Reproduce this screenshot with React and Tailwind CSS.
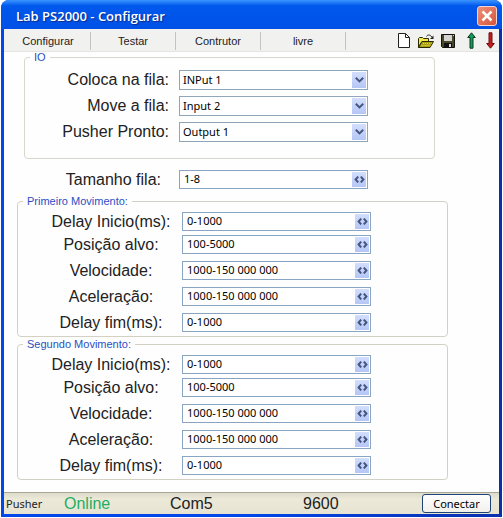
import React, { useId } from "react";

const tahoma = "font-['Noto_Sans','Liberation_Sans',sans-serif]";

function SelectField({ label, options }) {
  const id = useId();
  return (
    <div className="flex items-center">
      <label htmlFor={id} className="w-[144px] text-right text-base leading-5">
        {label}
      </label>
      <div className="relative ml-[10px] h-5 w-[189px]">
        <select
          id={id}
          className={`block h-5 w-full appearance-none border border-[#8fa6bd] bg-white pr-5 pb-px pl-[3px] text-[11px] leading-4 text-black outline-none ${tahoma}`}
        >
          {options.map((o) => (
            <option key={o}>{o}</option>
          ))}
        </select>
        <span className="pointer-events-none absolute top-[2px] right-[2px] flex h-4 w-[14px] items-center justify-center bg-linear-to-b from-[#d3defc] to-[#b5c6f6]">
          <svg width="9" height="6" viewBox="0 0 9 6" fill="none" stroke="#44567f" strokeWidth="2">
            <path d="M0.8 0.8 4.5 4.4 8.2 0.8" />
          </svg>
        </span>
      </div>
    </div>
  );
}

function RangeField({ id, value }) {
  return (
    <div className="flex h-[19px] w-[189px] items-stretch border border-[#8aa5c4] bg-white py-px pr-px">
      <input
        id={id}
        type="text"
        defaultValue={value}
        className={`min-w-0 flex-1 bg-white pb-px pl-1 text-[11px] leading-[14px] text-black outline-none ${tahoma}`}
      />
      <button
        type="button"
        aria-label="Alterar valor"
        className="flex w-[14px] items-center justify-center bg-linear-to-b from-[#d3defc] to-[#b5c6f6]"
      >
        <svg width="11" height="7" viewBox="0 0 11 7" fill="none" stroke="#44567f" strokeWidth="2">
          <path d="M4.2 0.6 1.6 3.5 4.2 6.4M6.8 0.6 9.4 3.5 6.8 6.4" />
        </svg>
      </button>
    </div>
  );
}

function MovementRow({ label, value }) {
  const id = useId();
  return (
    <div className="flex items-center gap-2">
      <label htmlFor={id} className="w-[156px] pl-[30px] text-center text-base leading-[19px] whitespace-nowrap">
        {label}
      </label>
      <RangeField id={id} value={value} />
    </div>
  );
}

function Movement({ title, className }) {
  return (
    <fieldset className={`mr-[51px] ml-[13px] rounded border border-[#d3d0c4] pt-[6px] pb-1 ${className}`}>
      <legend className="ml-[5px] px-1 text-[11px] leading-[10px] text-[#2a4fc4]">{title}</legend>
      <div className="flex flex-col gap-1">
        <MovementRow label="Delay Inicio(ms):" value="0-1000" />
        <div className="flex flex-col gap-[7px]">
          <MovementRow label="Posição alvo:" value="100-5000" />
          <MovementRow label="Velocidade:" value="1000-150 000 000" />
          <MovementRow label="Aceleração:" value="1000-150 000 000" />
          <MovementRow label="Delay fim(ms):" value="0-1000" />
        </div>
      </div>
    </fieldset>
  );
}

function NewIcon() {
  return (
    <svg width="12" height="15" viewBox="0 0 12 15">
      <path d="M0.5 0.5H7.5L11.5 4.5V14.5H0.5Z" fill="#fff" stroke="#222" />
      <path d="M7.5 0.5V4.5H11.5" fill="none" stroke="#222" />
    </svg>
  );
}

function OpenIcon() {
  return (
    <svg width="16" height="14" viewBox="0 0 16 14">
      <path d="M0.5 13.5V4.5L1.5 3.5H4.5L5.5 4.5H10.5V7.5H4L0.5 13.5" fill="#f2e94a" stroke="#2b2900" />
      <path d="M0.5 13.5 4 7.5H15.5L12 13.5Z" fill="#a89f14" stroke="#2b2900" />
      <path d="M3.5 11.5h9M5 9.5h8.5" stroke="#e6dc3c" strokeDasharray="1 1" />
      <path d="M8.5 2.5C9.5 0.5 12 0.3 13.8 3" fill="none" stroke="#222" />
      <path d="M15.5 1.5V5H12Z" fill="#222" />
    </svg>
  );
}

function SaveIcon() {
  return (
    <svg width="14" height="14" viewBox="0 0 14 14">
      <path d="M0.5 0.5H13.5V13.5H1.5L0.5 12.5Z" fill="#4a4826" stroke="#111" />
      <rect x="3" y="1" width="8" height="6" fill="#d4d4d4" />
      <rect x="3" y="9" width="8" height="5" fill="#111" />
      <rect x="8" y="10" width="2" height="3" fill="#ddd" />
      <rect x="12" y="1" width="1" height="1" fill="#ddd" />
    </svg>
  );
}

function UpIcon() {
  return (
    <svg width="9" height="17" viewBox="0 0 9 17">
      <path d="M4.5 0.8 8.3 5.5H6V16.2H3V5.5H0.7Z" fill="#129a5c" stroke="#0b3823" />
    </svg>
  );
}

function DownIcon() {
  return (
    <svg width="9" height="17" viewBox="0 0 9 17">
      <path d="M4.5 16.2 8.3 11.5H6V0.8H3V11.5H0.7Z" fill="#c41c20" stroke="#6b1012" />
    </svg>
  );
}

const menu = ["Configurar", "Testar", "Contrutor", "livre"];

export default function App() {
  const sizeId = useId();
  return (
    <div className="flex min-h-screen flex-col bg-white px-px pb-px font-['Liberation_Sans',Arial,sans-serif] text-[#222]">
      <div className="flex flex-1 flex-col rounded-t-lg bg-linear-to-r from-[#0046e8] from-50% to-[#0a2fae] to-100% px-[3px] pb-[3px]">
        <header className="-mx-[3px] flex h-[29px] items-center justify-between rounded-t-lg bg-linear-to-b from-[#3a94ff] via-[#0058ec] via-20% to-[#0050e6] pt-[3px] pr-[5px] pl-[15px]">
          <h1 className="font-['Open_Sans','Noto_Sans',sans-serif] text-[13px] leading-5 font-semibold text-white [text-shadow:1px_1px_1px_#0a2a8c]">
            Lab PS2000 - Configurar
          </h1>
          <button
            type="button"
            aria-label="Fechar"
            className="flex h-5 w-5 items-center justify-center rounded-[3px] border border-[#f6d5cf] bg-linear-to-br from-[#ee9078] to-[#d4543a]"
          >
            <svg width="12" height="12" viewBox="0 0 12 12" stroke="#fff" strokeWidth="2.5">
              <path d="M1.5 1.5 10.5 10.5M10.5 1.5 1.5 10.5" />
            </svg>
          </button>
        </header>

        <div className="flex h-[23px] items-center justify-between border-b border-[#e4e4e0] bg-[#f1f1f0] pt-px pr-1 pl-[2px]">
          <nav className="flex">
            {menu.map((m) => (
              <button
                key={m}
                type="button"
                className="h-[18px] w-[85px] border-r border-[#c4c4be] text-[11px] leading-4"
              >
                {m}
              </button>
            ))}
          </nav>
          <div className="flex items-center">
            <button type="button" aria-label="Novo"><NewIcon /></button>
            <button type="button" aria-label="Abrir" className="ml-2"><OpenIcon /></button>
            <button type="button" aria-label="Salvar" className="ml-[7px]"><SaveIcon /></button>
            <button type="button" aria-label="Subir" className="ml-3"><UpIcon /></button>
            <button type="button" aria-label="Descer" className="ml-[10px]"><DownIcon /></button>
          </div>
        </div>

        <main className="flex-1 bg-[#fefefe] pb-3">
          <fieldset className="mr-16 ml-5 rounded border border-[#d9d6cc] pt-2 pb-4">
            <legend className="ml-[5px] px-1 text-[11px] leading-[10px] text-[#2a4fc4]">IO</legend>
            <div className="flex flex-col gap-[6px]">
              <SelectField label="Coloca na fila:" options={["INPut 1", "Input 1"]} />
              <SelectField label="Move a fila:" options={["Input 2", "Input 3"]} />
              <SelectField label="Pusher Pronto:" options={["Output 1", "Output 2"]} />
            </div>
          </fieldset>

          <div className="mt-[11px] flex items-center gap-[18px]">
            <label htmlFor={sizeId} className="w-[157px] text-right text-base leading-[19px]">
              Tamanho fila:
            </label>
            <RangeField id={sizeId} value="1-8" />
          </div>

          <Movement title="Primeiro Movimento:" className="mt-[7px]" />
          <Movement title="Segundo Movimento:" className="mt-[2px]" />
        </main>

        <footer className="flex h-[22px] items-center border-t border-[#a9a798] bg-linear-to-b from-[#dedbcb] via-[#ece9d9] via-30% to-[#e6e3d2] pr-2 pl-[2px]">
          <span className={`w-[58px] text-[11px] leading-4 ${tahoma}`}>Pusher</span>
          <span className="w-[106px] text-base leading-5 text-[#1fae62]">Online</span>
          <span className="w-[133px] text-base leading-5">Com5</span>
          <span className="text-base leading-5">9600</span>
          <button
            type="button"
            className={`ml-auto h-[19px] w-[69px] rounded-[3px] border border-[#1d4478] bg-linear-to-b from-white to-[#f1f0ea] text-[11px] leading-4 text-black ${tahoma}`}
          >
            Conectar
          </button>
        </footer>
      </div>
    </div>
  );
}
